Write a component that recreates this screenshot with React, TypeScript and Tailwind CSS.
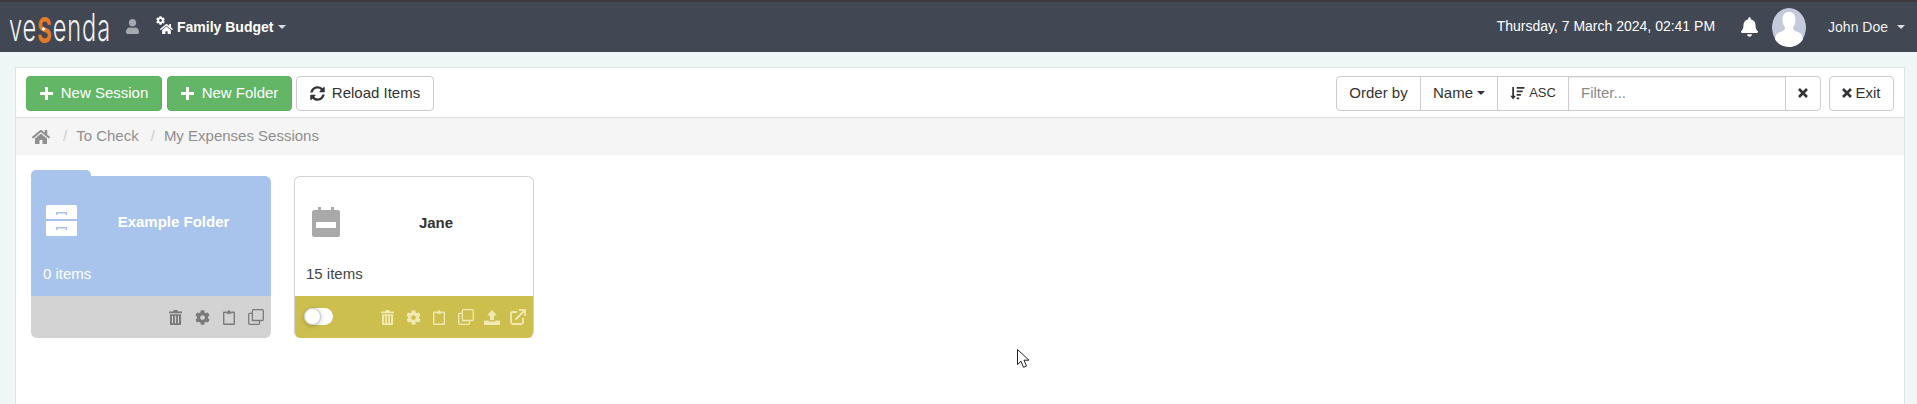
import React from "react";
import { FaSyncAlt, FaHome, FaSortAmountDown, FaBell, FaUser, FaCog } from "react-icons/fa";

const Trash = ({ c = "" }: { c?: string }) => (
  <svg viewBox="0 0 14 16" className={"w-[13px] h-[15px] " + c} fill="currentColor">
    <path d="M5 0h4l.7 1.6H14V3.4H0V1.6h4.3zM1 4.4h12V15a1 1 0 0 1-1 1H2a1 1 0 0 1-1-1zm2.2 1.800v8h1.200v-8zm3.200 0v8h1.200v-8zm3.200 0v8h1.200v-8z" />
  </svg>
);
const Clip = ({ c = "" }: { c?: string }) => (
  <svg viewBox="0 0 12 15" className={"w-[12px] h-[15px] " + c} fill="none" stroke="currentColor" strokeWidth="1.4">
    <path d="M3.500 2.200H1.200a.5.5 0 0 0-.5.5v11a.5.5 0 0 0 .5.5h9.600a.5.5 0 0 0 .5-.5v-11a.5.5 0 0 0-.5-.5H8.500" />
    <path d="M3.800 3.600V1.900h1.200V.8h2v1.100h1.200v1.700z" fill="currentColor" strokeWidth=".6" />
  </svg>
);
const Copy = ({ c = "" }: { c?: string }) => (
  <svg viewBox="0 0 16 16" className={"w-[16px] h-[16px] " + c} fill="none" stroke="currentColor" strokeWidth="1.3">
    <path d="M4.400 11.500V1.700a1 1 0 0 1 1-1h8.900a1 1 0 0 1 1 1v8.800a1 1 0 0 1-1 1z" />
    <path d="M4.400 4.400H1.700a1 1 0 0 0-1 1v8.900a1 1 0 0 0 1 1h8.800a1 1 0 0 0 1-1v-2.800" />
  </svg>
);
const Upload = ({ c = "" }: { c?: string }) => (
  <svg viewBox="0 0 16 15" className={"w-[16px] h-[15px] " + c} fill="currentColor">
    <path d="M8 0l5 5.500H10V10H6V5.500H3zM0 10.500h4.700v1h6.600v-1H16V15H0z" />
  </svg>
);
const Share = ({ c = "" }: { c?: string }) => (
  <svg viewBox="0 0 16 16" className={"w-[16px] h-[16px] " + c} fill="none" stroke="currentColor" strokeWidth="1.8">
    <path d="M13 9v4.200a1.800 1.800 0 0 1-1.800 1.800H2.800A1.800 1.800 0 0 1 1 13.200V4.800A1.800 1.800 0 0 1 2.800 3H7" />
    <path d="M5.500 10.500L14 2M9 1h6v6" />
  </svg>
);
const Plus = () => (
  <svg viewBox="0 0 13 13" className="w-[13px] h-[13px] mr-[8px] shrink-0" fill="currentColor">
    <path d="M5 0h3v5h5v3H8v5H5V8H0V5h5z" />
  </svg>
);
const Cross = ({ c = "" }: { c?: string }) => (
  <svg viewBox="0 0 10 10" className={"w-[10px] h-[10px] shrink-0 " + c} fill="none" stroke="currentColor" strokeWidth="2.6">
    <path d="M1 1l8 8M9 1l-8 8" />
  </svg>
);
const Caret = ({ c = "" }: { c?: string }) => (
  <span className={"inline-block w-0 h-0 border-x-[4px] border-t-[4px] border-x-transparent border-t-current shrink-0 " + c} />
);

const Btn = ({ children, c }: { children: React.ReactNode; c: string }) => (
  <div className={"h-[35px] flex items-center justify-center rounded-[4px] text-[15px] " + c}>{children}</div>
);

export default function App() {
  return (
    <div className="w-[1917px] h-[404px] overflow-hidden bg-[#eef7f6] text-[15px] text-[#333] relative" style={{ fontFamily: '"Liberation Sans", Arial, sans-serif' }}>
      <header className="h-[52px] bg-[#414854] border-t-2 border-[#3a3a3a] flex items-center text-white pr-[12px]">
        <svg viewBox="0 0 116 50" className="w-[116px] h-[50px] shrink-0" style={{ fontFamily: 'Inter, sans-serif' }}>
          <text transform="translate(9 39) scale(0.62 1)" fontSize="38" fontWeight="300" fill="#f2f2f2" letterSpacing="1.500">
            ve<tspan fontSize="36" fontWeight="700" fill="#e27a26" dy="2">S</tspan><tspan dy="-2">enda</tspan>
          </text>
          <path d="M43.500 25l2 2-2 2-2-2z" fill="#fff" />
        </svg>
        <FaUser className="ml-[10px] w-[13px] h-[15px] text-[#a5a8ae] -mt-[1px]" />
        <div className="ml-[17px] flex items-center relative">
          <FaCog className="absolute left-0 -top-[1px] w-[9px] h-[9px]" />
          <FaHome className="ml-[4px] mt-[3px] w-[13px] h-[12px]" />
          <span className="ml-[4px] font-bold text-[14px]">Family Budget</span>
          <Caret c="ml-[5px] text-[#ddd]" />
        </div>
        <div className="flex-1" />
        <span className="text-[14px] text-white -mt-[1px]">Thursday, 7 March 2024, 02:41 PM</span>
        <FaBell className="ml-[26px] w-[17px] h-[20px]" />
        <svg viewBox="0 0 34 39" className="ml-[14px] w-[34px] h-[39px] rounded-full">
          <ellipse cx="17" cy="19.500" rx="17" ry="19.500" fill="#c3cadc" />
          <path d="M17 4c4.500 0 6.500 3 6.500 7.500 0 3-1 6-2.500 8 0 3 2 3.500 6 5 3 1.300 4 4 4 9.500-3 3-8 5-14 5s-11-2-14-5c0-5.500 1-8.200 4-9.500 4-1.500 6-2 6-5-1.500-2-2.500-5-2.500-8C10.500 7 12.500 4 17 4z" fill="#fff" />
        </svg>
        <span className="ml-[22px] text-[14px] text-[#f0f0f0]">John Doe</span>
        <Caret c="ml-[9px] text-[#ddd]" />
      </header>

      <main className="ml-[15px] mr-[12px] mt-[15px] h-[345px] bg-white border border-[#dfe3e3] border-b-0">
        <div className="h-[50px] border-b border-[#dddddd] flex items-center pl-[10px] pr-[10px] pt-[1px]">
          <Btn c="w-[136px] bg-[#62b665] border border-[#5cb160] text-white"><Plus />New Session</Btn>
          <Btn c="w-[125px] ml-[5px] bg-[#62b665] border border-[#5cb160] text-white"><Plus />New Folder</Btn>
          <Btn c="w-[138px] ml-[4px] bg-white border border-[#cccccc]"><FaSyncAlt className="w-[15px] h-[15px] mr-[7px]" />Reload Items</Btn>
          <div className="flex-1" />
          <div className="flex h-[35px] border border-[#cccccc] rounded-[4px] w-[485px]">
            <div className="w-[84px] flex items-center justify-center border-r border-[#cccccc]">Order by</div>
            <div className="w-[77px] flex items-center justify-center border-r border-[#cccccc]">Name<Caret c="ml-[4px]" /></div>
            <div className="w-[71px] flex items-center justify-center border-r border-[#cccccc] text-[13px]"><FaSortAmountDown className="w-[15px] h-[14px] mr-[4px]" />ASC</div>
            <div className="w-[217px] flex items-center pl-[12px] border-r border-[#cccccc] text-[#8a8a8a] shadow-[inset_0_1px_1px_rgba(0,0,0,0.075)]">Filter...</div>
            <div className="flex-1 flex items-center justify-center"><Cross /></div>
          </div>
          <Btn c="w-[65px] ml-[8px] bg-white border border-[#cccccc]"><Cross c="mr-[3px]" />Exit</Btn>
        </div>
        <div className="h-[37px] bg-[#f5f5f5] flex items-center pl-[16px] text-[#8f8f8f]">
          <FaHome className="w-[18px] h-[16px]" />
          <span className="ml-[13px] text-[#ccc]">/</span>
          <span className="ml-[9px]">To Check</span>
          <span className="ml-[12px] text-[#ccc]">/</span>
          <span className="ml-[9px]">My Expenses Sessions</span>
        </div>
        <div className="flex pl-[15px] pt-[15px] gap-[23px] items-start">
          <div className="relative w-[240px] mt-[6px]">
            <div className="absolute left-0 -top-[6px] w-[60px] h-[10px] bg-[#a8c4ec] rounded-t-[5px]" />
            <div className="relative h-[162px] rounded-[6px] overflow-hidden flex flex-col">
              <div className="h-[120px] bg-[#a8c4ec] text-white relative flex flex-col">
                <div className="h-[93px] flex items-center pl-[15px]">
                  <svg viewBox="0 0 31 31" className="w-[31px] h-[31px] -mt-[5px] shrink-0" fill="#fff">
                    <path fillRule="evenodd" d="M1.500 0h28A1.500 1.500 0 0 1 31 1.500V14H0V1.500A1.500 1.500 0 0 1 1.500 0zM10 7v3h1.500V8.500h8V10H21V7zM0 16h31v13.500a1.500 1.500 0 0 1-1.500 1.500h-28A1.500 1.500 0 0 1 0 29.500zM10 22v3h1.500v-1.500h8V25H21v-3z" />
                  </svg>
                  <div className="flex-1 text-center font-bold text-[15px] pl-[2px] pr-[3px]">Example Folder</div>
                </div>
                <div className="pl-[12px] -mt-[6px]">0 items</div>
              </div>
              <div className="flex-1 bg-[#d3d3d3] text-[#7a7a7a] flex items-center justify-end gap-[13px] pr-[7px]">
                <Trash /><FaCog className="w-[15px] h-[15px]" /><Clip /><Copy />
              </div>
            </div>
          </div>
          <div className="relative w-[240px] mt-[6px] h-[162px] rounded-[6px] overflow-hidden border border-[#d3d3d3] border-b-0 flex flex-col">
            <div className="h-[119px] flex flex-col">
              <div className="h-[92px] flex items-center pl-[17px]">
                <svg viewBox="0 0 28 30" className="w-[28px] h-[30px] -mt-[3px] shrink-0" fill="#a9a9a9">
                  <path fillRule="evenodd" d="M6 0h3v3h10V0h3v3h3.500A2.500 2.500 0 0 1 28 5.500V28a2 2 0 0 1-2 2H2a2 2 0 0 1-2-2V5.500A2.500 2.500 0 0 1 2.500 3H6zM4 15v6h20v-6z" />
                </svg>
                <div className="flex-1 text-center font-bold text-[15px] pr-[3px] pl-[2px]">Jane</div>
              </div>
              <div className="pl-[11px] -mt-[6px] text-[#444]">15 items</div>
            </div>
            <div className="flex-1 -mx-[1px] bg-[#cdbf4e] text-[#f0e9b2] flex items-center pl-[10px] pr-[8px]">
              <div className="relative w-[29px] h-[17px] rounded-full bg-white mr-auto shrink-0 -mt-[1px]">
                <div className="absolute left-0 top-0 w-[17px] h-[17px] rounded-full bg-white border border-[#c8c8c8] shadow-[0_1px_4px_rgba(0,0,0,0.25)]" />
              </div>
              <Trash /><FaCog className="ml-[12px] w-[15px] h-[15px]" /><Clip c="ml-[12px]" /><Copy c="ml-[13px]" /><Upload c="ml-[10px]" /><Share c="ml-[10px]" />
            </div>
          </div>
        </div>
      </main>

      <svg viewBox="0 0 13 20" className="absolute left-[1017px] top-[349px] w-[13px] h-[20px]" fill="#fff" stroke="#222" strokeWidth="1">
        <path d="M.5.500v15l3.500-3.200 2.500 6 3-1.300-2.500-5.800H12z" />
      </svg>
    </div>
  );
}
